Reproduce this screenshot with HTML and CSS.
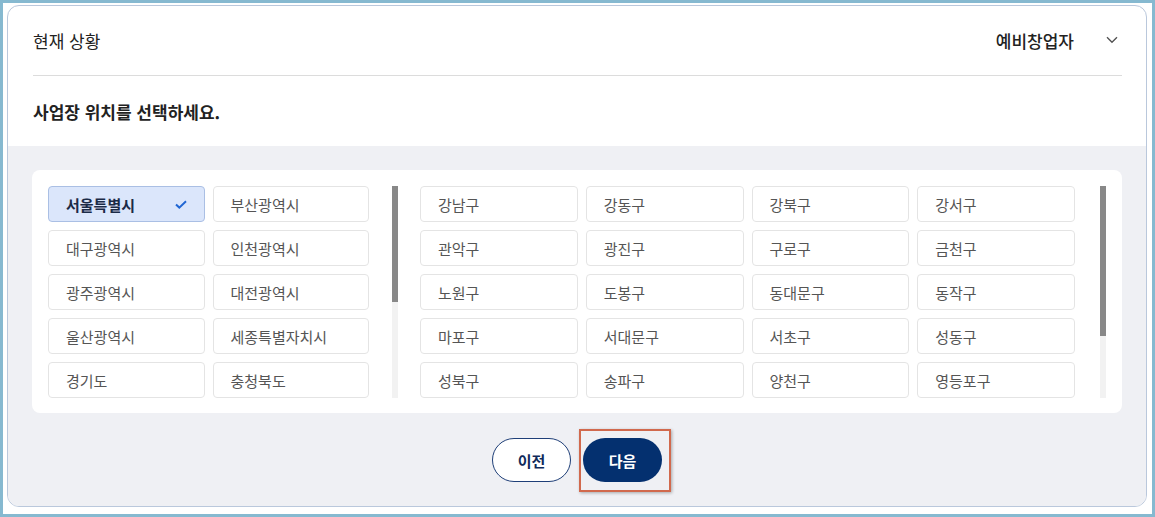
FILE: index.html
```html
<!DOCTYPE html>
<html lang="ko">
<head>
<meta charset="utf-8">
<link rel="stylesheet" href="styles.css">
</head>
<body>
<div class="frame">
  <div class="card">
    <div class="status-row">
      <span class="status-label">현재 상황</span>
      <div class="status-value">
        <span>예비창업자</span>
        <svg class="chevron" width="12" height="8" viewBox="0 0 12 8"><path d="M1 1.2 L6 6.2 L11 1.2" fill="none" stroke="#555" stroke-width="1.4"/></svg>
      </div>
    </div>
    <div class="question">사업장 위치를 선택하세요.</div>
    <div class="gray">
      <div class="panel">
        <div class="list-box left">
          <div class="list">
            <div class="grid grid-2">
              <div class="item selected"><span>서울특별시</span><svg width="12" height="9" viewBox="0 0 12 9"><path d="M1 4.5 L4.3 7.6 L11 1.2" fill="none" stroke="#2166d3" stroke-width="2"/></svg></div>
              <div class="item">부산광역시</div>
              <div class="item">대구광역시</div>
              <div class="item">인천광역시</div>
              <div class="item">광주광역시</div>
              <div class="item">대전광역시</div>
              <div class="item">울산광역시</div>
              <div class="item">세종특별자치시</div>
              <div class="item">경기도</div>
              <div class="item">충청북도</div>
            </div>
          </div>
          <div class="scrollbar"><div class="thumb" style="height: 116px"></div></div>
        </div>
        <div class="list-box right">
          <div class="list">
            <div class="grid grid-4">
              <div class="item">강남구</div>
              <div class="item">강동구</div>
              <div class="item">강북구</div>
              <div class="item">강서구</div>
              <div class="item">관악구</div>
              <div class="item">광진구</div>
              <div class="item">구로구</div>
              <div class="item">금천구</div>
              <div class="item">노원구</div>
              <div class="item">도봉구</div>
              <div class="item">동대문구</div>
              <div class="item">동작구</div>
              <div class="item">마포구</div>
              <div class="item">서대문구</div>
              <div class="item">서초구</div>
              <div class="item">성동구</div>
              <div class="item">성북구</div>
              <div class="item">송파구</div>
              <div class="item">양천구</div>
              <div class="item">영등포구</div>
            </div>
          </div>
          <div class="scrollbar"><div class="thumb" style="height: 150px"></div></div>
        </div>
      </div>
      <div class="actions">
        <button class="btn prev">이전</button>
        <div class="next-wrap">
          <button class="btn next">다음</button>
          <div class="highlight"></div>
        </div>
      </div>
    </div>
  </div>
</div>
</body>
</html>
```
FILE: styles.css
```css
* { box-sizing: border-box; }
html, body { margin: 0; padding: 0; }
body {
  background: #ffffff;
  font-family: "Noto Sans CJK KR", "Noto Sans", sans-serif;
  color: #222;
}
.frame {
  width: 1155px;
  height: 517px;
  border: 3px solid #86b9d0;
  padding: 2px 0 0 4px;
  background: #fff;
}
.card {
  width: 1140px;
  height: 502px;
  border: 1px solid #bac8dc;
  border-radius: 12px;
  overflow: hidden;
  display: flex;
  flex-direction: column;
  background: #fff;
}
.status-row {
  margin: 0 24px 0 25px;
  height: 70px;
  border-bottom: 1px solid #dcdcdc;
  display: flex;
  align-items: center;
  justify-content: space-between;
  padding-bottom: 1px;
}
.status-label {
  font-size: 17px;
  color: #222;
}
.status-value {
  display: flex;
  align-items: center;
  font-size: 17px;
  font-weight: 500;
  color: #222;
}
.chevron {
  margin-left: 32px;
  margin-right: 4px;
}
.question {
  height: 70px;
  padding-left: 25px;
  display: flex;
  align-items: center;
  font-size: 17px;
  font-weight: 700;
  color: #222;
}
.gray {
  flex: 1;
  background: #eff0f4;
  padding: 24px 24px 0 24px;
}
.panel {
  background: #fff;
  border-radius: 8px;
  padding: 16px 16px 15px 16px;
  display: flex;
  gap: 22px;
}
.list-box {
  height: 212px;
  display: flex;
}
.left { width: 350px; gap: 23px; }
.right { flex: 1; gap: 25px; }
.list {
  flex: 1;
  overflow: hidden;
}
.scrollbar {
  width: 6px;
  height: 100%;
  background: #f2f2f2;
}
.thumb {
  width: 100%;
  background: #888;
}
.grid {
  display: grid;
  gap: 8px;
}
.grid-2 { grid-template-columns: repeat(2, 1fr); }
.grid-4 { grid-template-columns: repeat(4, 1fr); }
.item {
  height: 36px;
  border: 1px solid #e4e4e4;
  border-radius: 4px;
  display: flex;
  align-items: center;
  justify-content: space-between;
  padding: 0 17px 0 17px;
  font-size: 15px;
  color: #555;
  background: #fff;
}
.item.selected {
  background: #dbe6fb;
  border-color: #aabfe4;
  color: #1b2a47;
  font-weight: 700;
}
.actions {
  display: flex;
  justify-content: center;
  gap: 12px;
  margin-top: 25px;
}
.btn {
  width: 79px;
  height: 44px;
  border-radius: 22px;
  font-family: "Noto Sans CJK KR", "Noto Sans", sans-serif;
  font-size: 15px;
  font-weight: 700;
  cursor: pointer;
}
.prev {
  background: #fff;
  border: 1px solid #1f3f78;
  color: #0f2a5a;
}
.next {
  background: #04306f;
  border: none;
  color: #fff;
}
.next-wrap { position: relative; }
.highlight {
  position: absolute;
  left: -4px;
  top: -9px;
  width: 92px;
  height: 63px;
  border: 2px solid #d1694d;
  box-shadow: 1px 1px 3px rgba(0,0,0,0.3);
  pointer-events: none;
}
```
